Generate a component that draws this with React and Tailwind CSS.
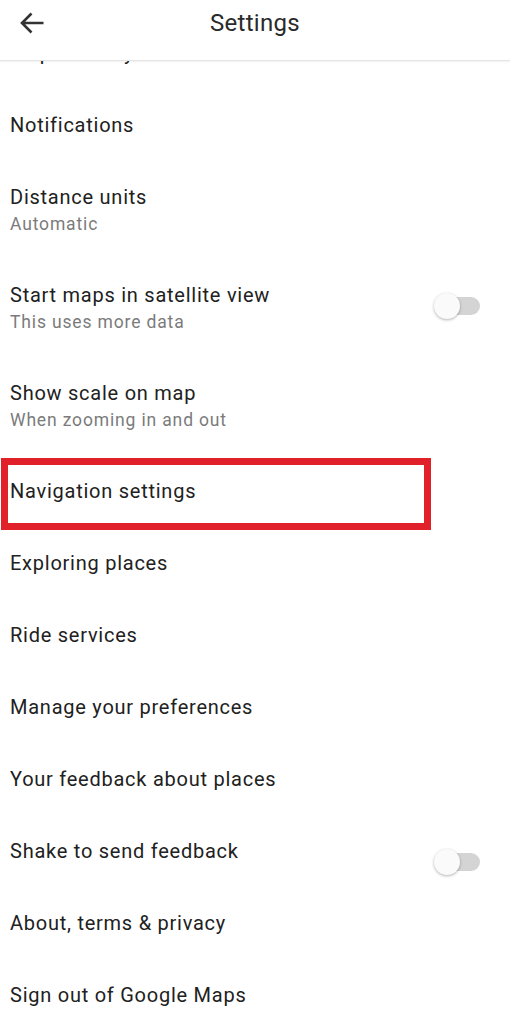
import React from "react";

const font = { fontFamily: "Roboto, 'Noto Sans', sans-serif" };

function Toggle() {
  return (
    <div className="relative w-[46px] h-[28px] flex items-center">
      <div className="absolute left-[6px] right-0 h-[18px] rounded-full bg-[#d4d4d4]" />
      <div className="absolute left-0 w-[26px] h-[26px] rounded-full bg-[#fafafa] shadow-[0_1px_3px_rgba(0,0,0,0.3)]" />
    </div>
  );
}

function Row({ title, sub, toggle, annotate }) {
  return (
    <div className={`relative flex items-start justify-between pl-[10px] pr-[30px] ${sub ? "h-[98px]" : "h-[72px]"}`}>
      <div className="pt-[22px]">
        <div className="text-[20px] leading-[26px] tracking-[0.75px] text-[#212121]">{title}</div>
        {sub && <div className="text-[17.5px] leading-[22px] mt-[3px] tracking-[0.85px] text-[#7b7b7b]">{sub}</div>}
      </div>
      {toggle && (
        <div className="pt-[32px]">
          <Toggle />
        </div>
      )}
      {annotate && (
        <div className="absolute left-[1px] top-[2px] w-[430px] h-[72px] border-[7px] border-[#e0212a]" />
      )}
    </div>
  );
}

export default function App() {
  return (
    <div className="w-[510px] h-[1024px] overflow-hidden bg-white relative" style={font}>
      <div className="absolute top-0 left-0 right-0 z-10 h-[61px] bg-white flex items-start pt-[8px] border-b border-[#e4e4e4] shadow-[0_1px_2px_rgba(0,0,0,0.06)]">
        <div className="w-[64px] h-[30px] flex items-center pl-[19px]">
          <svg width="26" height="24" viewBox="0 0 26 24" fill="none" className="mt-[-1px]">
            <path d="M3 12H24.5M12.5 2.5L3 12l9.5 9.5" stroke="#333" strokeWidth="2.6" strokeLinecap="butt" strokeLinejoin="miter" />
          </svg>
        </div>
        <div className="flex-1 text-center pr-[64px] text-[24px] leading-[30px] tracking-[0.3px] text-[#2a2a2a]">Settings</div>
      </div>
      <div className="pt-[18px]">
        <Row title="Maps history" />
        <Row title="Notifications" />
        <Row title="Distance units" sub="Automatic" />
        <Row title="Start maps in satellite view" sub="This uses more data" toggle />
        <Row title="Show scale on map" sub="When zooming in and out" />
        <Row title="Navigation settings" annotate />
        <Row title="Exploring places" />
        <Row title="Ride services" />
        <Row title="Manage your preferences" />
        <Row title="Your feedback about places" />
        <Row title="Shake to send feedback" toggle />
        <Row title="About, terms & privacy" />
        <Row title="Sign out of Google Maps" />
      </div>
    </div>
  );
}
